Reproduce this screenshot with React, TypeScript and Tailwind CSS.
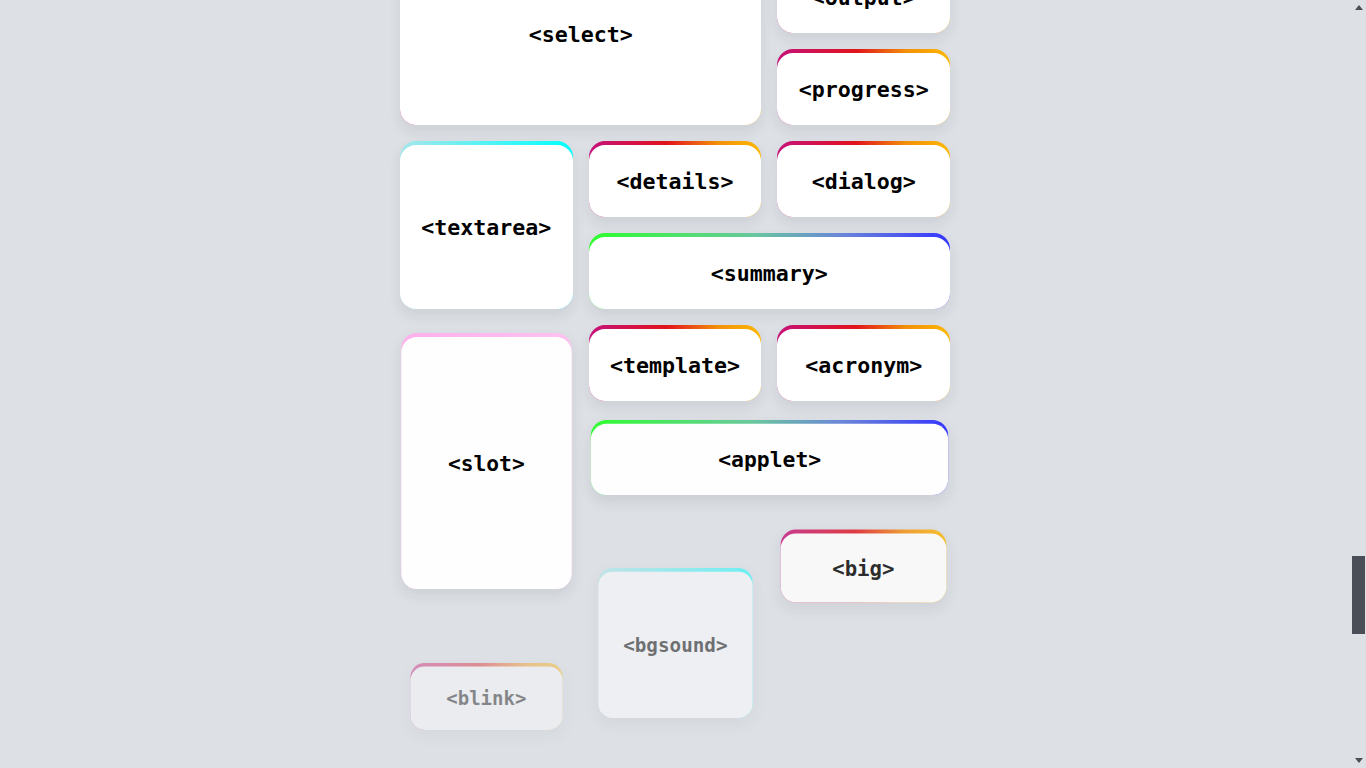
import React from 'react'

type Tone = 'sunset' | 'sea' | 'cyan' | 'pink'

const strips: Record<Tone, string> = {
  sunset: 'bg-[linear-gradient(90deg,#c4127c,#e0121c_45%,#f4900a_75%,#fbb800)]',
  sea: 'bg-[linear-gradient(90deg,#2cff2c,#68c89c_45%,#6a86d8_70%,#3434ff)]',
  cyan: 'bg-[linear-gradient(90deg,#a6e6ea,#00ffff)]',
  pink: 'bg-[linear-gradient(90deg,#ffb0ee,#ffc2f2)]',
}

interface TagCardProps {
  tag: string
  tone: Tone
  className?: string
}

function TagCard({ tag, tone, className = '' }: TagCardProps) {
  return (
    <div
      className={`flex flex-col rounded-2xl pt-1 shadow-[0_6px_14px_rgba(30,40,60,0.09)] ${strips[tone]} ${className}`}
    >
      <div className="flex flex-1 items-center justify-center rounded-2xl bg-white pt-[2px]">
        <span className="font-['DejaVu_Sans_Mono',monospace] text-[21.6px] font-bold text-black">
          &lt;{tag}&gt;
        </span>
      </div>
    </div>
  )
}

function Scrollbar() {
  return (
    <div className="flex w-[15px] flex-col bg-[#dde0e5]">
      <div className="flex h-[15px] items-center justify-center">
        <svg width="8" height="5" viewBox="0 0 8 5">
          <path d="M4 0L8 5H0z" fill="#4a4f57" />
        </svg>
      </div>
      <div className="flex-1 pt-[541px]">
        <div className="ml-[1px] h-[78px] w-[13px] bg-[#4a4f57]" />
      </div>
      <div className="flex h-[15px] items-center justify-center">
        <svg width="8" height="5" viewBox="0 0 8 5">
          <path d="M0 0H8L4 5z" fill="#4a4f57" />
        </svg>
      </div>
    </div>
  )
}

export default function App() {
  return (
    <div className="flex h-screen overflow-hidden bg-[#dde0e5]">
      <div className="flex-1 overflow-hidden pr-px">
        <div className="mx-auto mt-[-61px] grid w-[550px] grid-cols-3 grid-rows-[94px_repeat(7,76px)] gap-4">
          <TagCard tag="select" tone="sunset" className="col-span-2 row-span-2" />
          <TagCard tag="output" tone="sunset" className="h-[76px] self-end" />
          <TagCard tag="progress" tone="sunset" className="col-start-3" />

          <TagCard tag="textarea" tone="cyan" className="row-span-2" />
          <TagCard tag="details" tone="sunset" />
          <TagCard tag="dialog" tone="sunset" />
          <TagCard tag="summary" tone="sea" className="col-span-2 col-start-2" />

          <TagCard
            tag="slot"
            tone="pink"
            className="row-span-3 translate-y-[6px] scale-[0.985] opacity-[0.98]"
          />
          <TagCard tag="template" tone="sunset" />
          <TagCard tag="acronym" tone="sunset" />
          <TagCard
            tag="applet"
            tone="sea"
            className="col-span-2 col-start-2 translate-y-[2.5px] scale-[0.99] opacity-[0.99]"
          />

          <TagCard
            tag="bgsound"
            tone="cyan"
            className="col-start-2 row-span-2 row-start-7 translate-y-[50px] scale-[0.892] opacity-[0.5]"
          />
          <TagCard
            tag="big"
            tone="sunset"
            className="col-start-3 row-start-7 translate-y-[19px] scale-[0.958] opacity-[0.8]"
          />
          <TagCard
            tag="blink"
            tone="sunset"
            className="col-start-1 row-start-8 translate-y-[57.5px] scale-[0.88] opacity-[0.4]"
          />
        </div>
      </div>
      <Scrollbar />
    </div>
  )
}
